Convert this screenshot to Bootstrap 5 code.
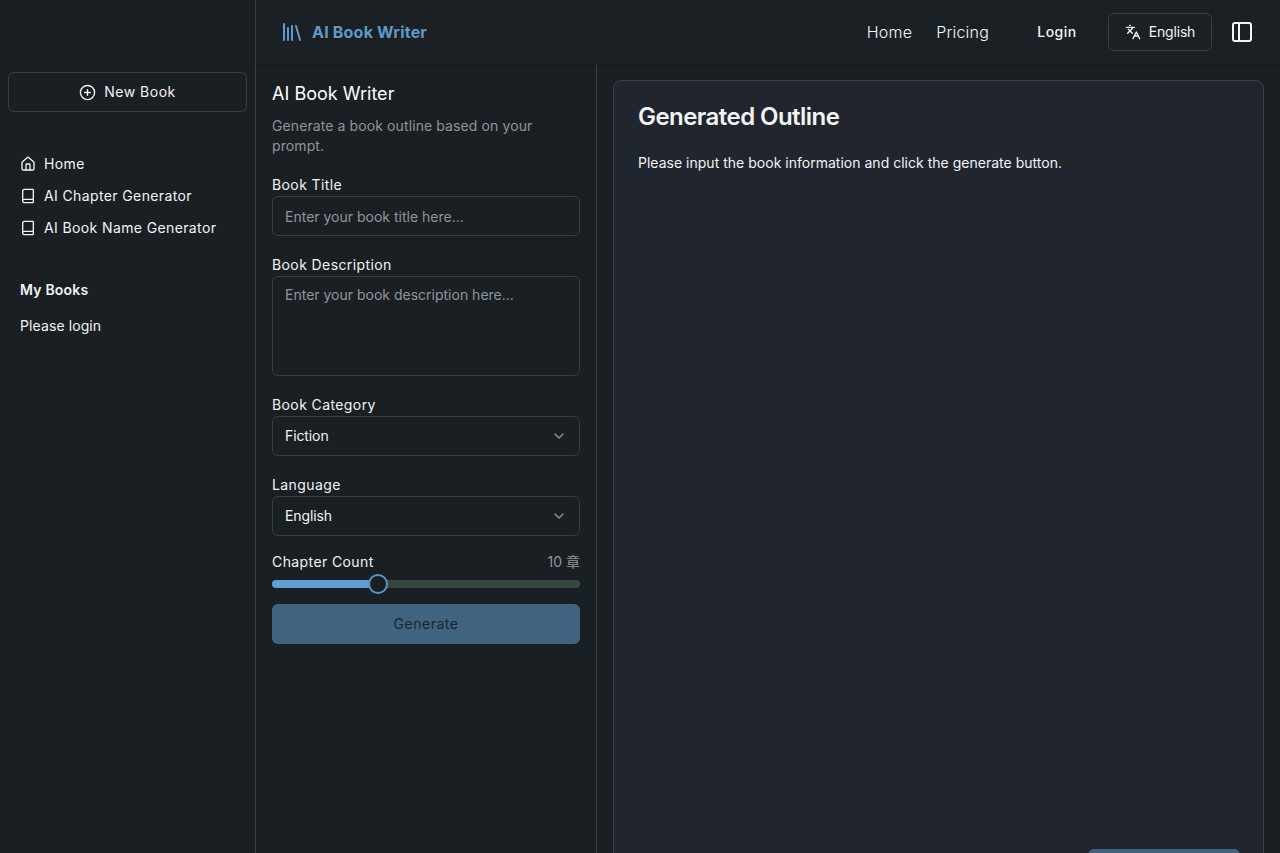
<!DOCTYPE html>
<html lang="en" data-bs-theme="dark">
<head>
<meta charset="utf-8">
<title>AI Book Writer</title>
<link href="https://cdn.jsdelivr.net/npm/bootstrap@5.3.0/dist/css/bootstrap.min.css" rel="stylesheet">
<style>
html,body{height:853px;overflow:hidden}
body{background:#1a1f24;color:#f2f3f4;font-family:Inter,"Noto Sans CJK SC",sans-serif;font-size:14px;line-height:20px}
svg.ic{fill:none;stroke:currentColor;stroke-width:2;stroke-linecap:round;stroke-linejoin:round;flex:none}
.shell{height:853px}
.side{width:256px;border-right:1px solid #3a3f45;padding:72px 8px 0;flex:none}
.newbtn{width:239px;height:40px;border:1px solid #383d43;border-radius:6px;color:#f2f3f4;font-size:14px;font-weight:400;letter-spacing:.5px;background:transparent;line-height:18px;padding:0}
.sidenav{margin-top:36px;padding:0 12px}
.sidenav a{height:32px;color:#f2f3f4;text-decoration:none;font-weight:400;font-size:14px;letter-spacing:.38px}
.sidehead{margin:30px 12px 0;font-weight:600;height:32px;letter-spacing:.2px}
.sidetext{margin:4px 12px 0;height:32px;letter-spacing:.1px}
.topbar{height:64px;background:#1b2025;padding:0 26px 0 24px;box-shadow:0 1px 3px rgba(0,0,0,.12)}
.brand{color:#5f9ac8;font-size:16px;font-weight:700;letter-spacing:.2px;text-decoration:none}
.toplink{color:#f5f6f7;font-size:16px;text-decoration:none;font-weight:300;letter-spacing:.2px}
.loginbtn{color:#f2f3f4;font-weight:500;font-size:14px;letter-spacing:.5px;margin-left:25px;width:86px;padding:0;background:transparent;border:0;line-height:18px}
.langbtn{width:104px;height:38px;border:1px solid #383d43;border-radius:6px;color:#f2f3f4;font-size:14px;letter-spacing:-.2px;padding:0;line-height:18px;background:transparent;margin-left:8px}
.panelbtn{width:24px;margin-left:18px;color:#f2f3f4}
.formpane{width:341px;border-right:1px solid #3a3f45;padding:16px;flex:none;height:789px}
.formtitle{font-size:18px;font-weight:400;letter-spacing:.02px;line-height:28px;margin:0 0 8px}
.formdesc{color:#8f959b;margin:0 0 20px;letter-spacing:.1px}
.flabel{display:block;font-weight:400;letter-spacing:.4px;margin:0;line-height:17px;height:20px;color:#f2f3f4}
.countrow .flabel{line-height:20px}
.form-control.fi,.form-select.fi{height:40px;background-color:transparent;border:1px solid #383d43;border-radius:6px;color:#f2f3f4;font-size:14px;padding:0 12px;box-shadow:none}
.form-select.fi{padding-bottom:2px;letter-spacing:-.1px}
.form-control.fi::placeholder{color:#8f959b;opacity:1}
textarea.form-control.fi{height:100px;padding:7px 12px;resize:none}
.form-select.fi{background-image:url("data:image/svg+xml,%3csvg xmlns='http://www.w3.org/2000/svg' viewBox='0 0 24 24' fill='none' stroke='%238f959b' stroke-width='2' stroke-linecap='round' stroke-linejoin='round'%3e%3cpath d='m6 9 6 6 6-6'/%3e%3c/svg%3e");background-size:16px 16px;background-position:right 12px center}
.fgroup{margin-bottom:20px}
.countlbl{color:#8f959b}
.sliderinput{display:block;width:100%;height:20px;margin:2px 0 10px;appearance:none;-webkit-appearance:none;background:transparent}
.sliderinput::-webkit-slider-runnable-track{height:8px;border-radius:4px;background:linear-gradient(to right,#5f9fd3 33.33%,#374740 33.33%)}
.sliderinput::-webkit-slider-thumb{-webkit-appearance:none;width:20px;height:20px;border-radius:50%;background:#1a1f24;border:2px solid #5b95c4;margin-top:-6px}
.btn.genbtn:disabled{height:40px;background:#40637f;border:0;border-radius:6px;color:#1b2530;font-weight:400;font-size:14px;letter-spacing:.5px;opacity:1;padding:0 0 2px}
.outpane{padding:16px;height:789px;overflow:hidden}
.outcard{height:810px;width:651px;background:#21262e;border:1px solid #3a3f45;border-radius:8px;padding:16px 24px}
.outcard h2{font-size:24px;font-weight:600;letter-spacing:-.55px;line-height:40px;margin:0 0 16px;color:#f2f3f4}
.outbody{letter-spacing:.015px}
.btn.outfoot:disabled{width:152px;height:40px;background:#40637f;border:0;border-radius:6px;margin:676px -1px 0 0;opacity:1}
</style>
</head>
<body>
<div class="shell d-flex">
  <aside class="side">
    <button class="btn newbtn d-flex align-items-center justify-content-center gap-2">
      <svg class="ic" width="17" height="17" viewBox="0 0 24 24"><circle cx="12" cy="12" r="10"/><path d="M8 12h8M12 8v8"/></svg>New Book
    </button>
    <nav class="sidenav d-flex flex-column">
      <a href="#" class="d-flex align-items-center gap-2"><svg class="ic" width="16" height="16" viewBox="0 0 24 24"><path d="M15 21v-8a1 1 0 0 0-1-1h-4a1 1 0 0 0-1 1v8"/><path d="M3 10a2 2 0 0 1 .709-1.528l7-5.999a2 2 0 0 1 2.582 0l7 5.999A2 2 0 0 1 21 10v9a2 2 0 0 1-2 2H5a2 2 0 0 1-2-2z"/></svg>Home</a>
      <a href="#" class="d-flex align-items-center gap-2"><svg class="ic" width="16" height="16" viewBox="0 0 24 24"><path d="M4 19.5v-15A2.5 2.5 0 0 1 6.5 2H19a1 1 0 0 1 1 1v18a1 1 0 0 1-1 1H6.5a1 1 0 0 1 0-5H20"/></svg>AI Chapter Generator</a>
      <a href="#" class="d-flex align-items-center gap-2"><svg class="ic" width="16" height="16" viewBox="0 0 24 24"><path d="M4 19.5v-15A2.5 2.5 0 0 1 6.5 2H19a1 1 0 0 1 1 1v18a1 1 0 0 1-1 1H6.5a1 1 0 0 1 0-5H20"/></svg>AI Book Name Generator</a>
    </nav>
    <div class="sidehead d-flex align-items-center">My Books</div>
    <div class="sidetext d-flex align-items-center">Please login</div>
  </aside>
  <div class="flex-grow-1 d-flex flex-column">
    <header class="topbar d-flex align-items-center">
      <a href="#" class="brand d-flex align-items-center gap-2 me-auto">
        <svg class="ic" width="24" height="24" viewBox="0 0 24 24"><path d="m16 6 4 14M12 6v14M8 8v12M4 4v16"/></svg>AI Book Writer
      </a>
      <nav class="d-flex gap-4">
        <a class="toplink" href="#">Home</a>
        <a class="toplink" href="#">Pricing</a>
      </nav>
      <button class="btn loginbtn">Login</button>
      <button class="btn langbtn d-flex align-items-center justify-content-center gap-2">
        <svg class="ic" width="16" height="16" viewBox="0 0 24 24"><path d="m5 8 6 6M4 14l6-6 2-3M2 5h12M7 2h1M22 22l-5-10-5 10M14 18h6"/></svg>English
      </button>
      <div class="panelbtn d-flex"><svg class="ic" width="24" height="24" viewBox="0 0 24 24"><rect x="3" y="3" width="18" height="18" rx="2"/><path d="M9 3v18"/></svg></div>
    </header>
    <div class="d-flex flex-grow-1">
      <section class="formpane">
        <h1 class="formtitle">AI Book Writer</h1>
        <p class="formdesc">Generate a book outline based on your prompt.</p>
        <div class="fgroup"><label class="flabel">Book Title</label><input class="form-control fi" placeholder="Enter your book title here..."></div>
        <div class="fgroup"><label class="flabel">Book Description</label><textarea class="form-control fi" placeholder="Enter your book description here..."></textarea></div>
        <div class="fgroup"><label class="flabel">Book Category</label><select class="form-select fi"><option>Fiction</option></select></div>
        <div class="fgroup mb-3"><label class="flabel">Language</label><select class="form-select fi"><option>English</option></select></div>
        <div class="countrow d-flex justify-content-between"><span class="flabel">Chapter Count</span><span class="countlbl">10 章</span></div>
        <input class="sliderinput" type="range" min="5" max="20" value="10">
        <button class="btn genbtn w-100" disabled>Generate</button>
      </section>
      <main class="outpane flex-grow-1">
        <div class="outcard">
          <h2>Generated Outline</h2>
          <p class="m-0 outbody">Please input the book information and click the generate button.</p>
          <div class="d-flex justify-content-end"><button class="btn outfoot" disabled aria-label="Export"></button></div>
        </div>
      </main>
    </div>
  </div>
</div>
<script src="https://cdn.jsdelivr.net/npm/bootstrap@5.3.0/dist/js/bootstrap.bundle.min.js"></script>
</body>
</html>
